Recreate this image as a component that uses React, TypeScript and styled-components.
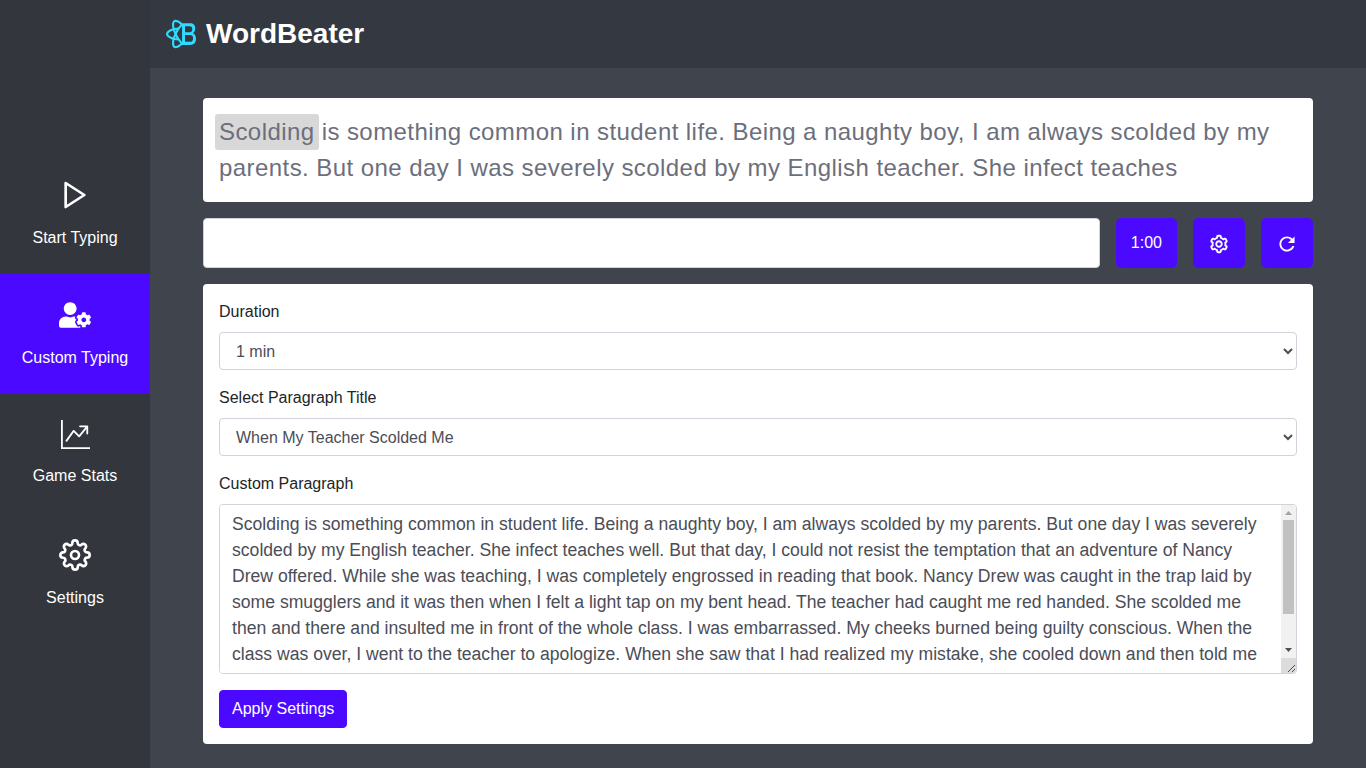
import React, { useLayoutEffect, useRef, useState } from "react";
import styled, { createGlobalStyle } from "styled-components";
import { SiReactbootstrap } from "react-icons/si";
import { FaUserCog } from "react-icons/fa";
import { FiPlay, FiSettings } from "react-icons/fi";
import { BsGraphUpArrow } from "react-icons/bs";
import { BiCog } from "react-icons/bi";
import { IoMdRefresh } from "react-icons/io";

const accent = "#4b0aff";

const GlobalStyle = createGlobalStyle`
  *, *::before, *::after { box-sizing: border-box; }
  body {
    margin: 0;
    background: #40444c;
    color: #212529;
    font-family: "Liberation Sans", Arial, sans-serif;
    font-size: 16px;
    line-height: 24px;
  }
  button, input, select, textarea { font: inherit; margin: 0; }
`;

const Shell = styled.div`
  display: grid;
  grid-template-columns: 150px minmax(0, 1fr);
  min-height: 100vh;
`;

const Sidebar = styled.nav`
  display: flex;
  flex-direction: column;
  justify-content: center;
  padding-top: 20px;
  background: #33363d;
`;

const NavItem = styled.a<{ $active?: boolean }>`
  display: flex;
  flex-direction: column;
  align-items: center;
  gap: 15px;
  min-height: 120px;
  padding: 25px 0 24px;
  color: #fff;
  text-decoration: none;
  background: ${(p) => (p.$active ? accent : "transparent")};
`;

const NavIcon = styled.span`
  display: flex;
  align-items: center;
  min-height: 30px;
`;

const Header = styled.header`
  display: flex;
  align-items: center;
  gap: 10px;
  height: 68px;
  padding: 0 16px;
  background: #343840;
`;

const Brand = styled.h1`
  margin: 0;
  color: #fff;
  font-size: 28px;
  line-height: 34px;
  font-weight: 700;
`;

const Content = styled.main`
  display: flex;
  flex-direction: column;
  gap: 16px;
  max-width: 1140px;
  margin: 0 auto;
  padding: 30px 15px 24px;
`;

const Card = styled.section`
  padding: 16px;
  border-radius: 4px;
  background: #fff;
`;

const Passage = styled.p`
  margin: 0;
  color: #6c6f7b;
  font-size: 24px;
  line-height: 36px;
  letter-spacing: 0.018em;
`;

const CurrentWord = styled.mark`
  display: inline-block;
  border-radius: 3px;
  color: inherit;
  background: #d8d8d8;
  box-shadow: -4px 0 #d8d8d8, 4px 0 #d8d8d8;
`;

const Controls = styled.div`
  display: flex;
  gap: 16px;
`;

const TypingInput = styled.input`
  flex: 1;
  min-width: 0;
  height: 50px;
  padding: 6px 12px;
  border: 1px solid #ced4da;
  border-radius: 4px;
  background: #fff;
`;

const Button = styled.button`
  padding: 6px 12px;
  border: 1px solid ${accent};
  border-radius: 4px;
  color: #fff;
  background: ${accent};
  cursor: pointer;
`;

const ControlButton = styled(Button)`
  height: 50px;
  padding: 0 14px;
  border-radius: 5px;

  svg { vertical-align: middle; }
`;

const Field = styled.div`
  display: flex;
  flex-direction: column;
  gap: 8px;
  margin-bottom: 16px;
`;

const Select = styled.select`
  height: 38px;
  padding: 6px 12px;
  border: 1px solid #ced4da;
  border-radius: 4px;
  color: #4b4d57;
  background: #fff;
`;

const TextAreaFrame = styled.div`
  position: relative;
  overflow: hidden;
  border: 1px solid #ced4da;
  border-radius: 4px;
`;

const TextArea = styled.textarea`
  display: block;
  width: 100%;
  height: 168px;
  padding: 6px 27px 6px 12px;
  border: 0;
  color: #4b4d57;
  background: #fff;
  font-size: 110%;
  line-height: 26px;
  resize: none;
  scrollbar-width: none;
`;

const ScrollBar = styled.div`
  position: absolute;
  top: 0;
  right: 0;
  bottom: 0;
  display: flex;
  flex-direction: column;
  width: 15px;
  background: #f1f1f1;

  svg { display: block; }
`;

const Track = styled.div`
  flex: 1;
  padding: 0 2px;
`;

const Thumb = styled.div`
  background: #c1c1c1;
`;

const paragraph =
  "Scolding is something common in student life. Being a naughty boy, I am always scolded by my parents. But one day I was severely scolded by my English teacher. She infect teaches well. But that day, I could not resist the temptation that an adventure of Nancy Drew offered. While she was teaching, I was completely engrossed in reading that book. Nancy Drew was caught in the trap laid by some smugglers and it was then when I felt a light tap on my bent head. The teacher had caught me red handed. She scolded me then and there and insulted me in front of the whole class. I was embarrassed. My cheeks burned being guilty conscious. When the class was over, I went to the teacher to apologize. When she saw that I had realized my mistake, she cooled down and then told me in a very kind manner how disheartening it was when she found any student not paying attention. I was genuinely sorry and promised to myself never to commit such a mistake again.";

const navItems = [
  { label: "Start Typing", icon: <FiPlay size={32} /> },
  { label: "Custom Typing", icon: <FaUserCog size={32} />, active: true },
  { label: "Game Stats", icon: <BsGraphUpArrow size={29} /> },
  { label: "Settings", icon: <FiSettings size={32} /> },
];

function ParagraphEditor({ id }: { id: string }) {
  const ref = useRef<HTMLTextAreaElement>(null);
  const [text, setText] = useState(paragraph);
  const [scroll, setScroll] = useState({ offset: 0, visible: 1 });

  const measure = () => {
    const el = ref.current;
    if (!el) return;
    setScroll({
      offset: el.scrollTop / el.scrollHeight,
      visible: el.clientHeight / el.scrollHeight,
    });
  };

  useLayoutEffect(measure, [text]);

  return (
    <TextAreaFrame>
      <TextArea
        id={id}
        ref={ref}
        value={text}
        onScroll={measure}
        onChange={(e) => setText(e.target.value)}
      />
      <ScrollBar aria-hidden="true">
        <svg width="15" height="15">
          <polygon points="4,10 11,10 7.5,6" fill="#a3a3a3" />
        </svg>
        <Track>
          <Thumb
            style={{
              height: `${Math.round(scroll.visible * 123)}px`,
              marginTop: `${Math.round(scroll.offset * 123)}px`,
            }}
          />
        </Track>
        <svg width="15" height="15">
          <polygon points="4,5 11,5 7.5,9" fill="#505050" />
        </svg>
        <svg width="15" height="15">
          <rect width="15" height="15" fill="#dcdcdc" />
          <path d="M7 14L14 7M11 14L14 11" stroke="#505050" fill="none" />
        </svg>
      </ScrollBar>
    </TextAreaFrame>
  );
}

export default function App() {
  const [typed, setTyped] = useState("");

  return (
    <>
      <GlobalStyle />
      <Shell>
        <Sidebar aria-label="Main">
          {navItems.map((item) => (
            <NavItem
              key={item.label}
              href="#"
              $active={item.active}
              aria-current={item.active ? "page" : undefined}
            >
              <NavIcon>{item.icon}</NavIcon>
              <span>{item.label}</span>
            </NavItem>
          ))}
        </Sidebar>
        <div>
          <Header>
            <SiReactbootstrap size={30} color="#2fdcff" />
            <Brand>WordBeater</Brand>
          </Header>
          <Content>
            <Card>
              <Passage>
                <CurrentWord>Scolding</CurrentWord> is something common in student life. Being a
                naughty boy, I am always scolded by my parents. But one day I was severely scolded
                by my English teacher. She infect teaches
              </Passage>
            </Card>
            <Controls>
              <TypingInput
                aria-label="Type the paragraph"
                value={typed}
                onChange={(e) => setTyped(e.target.value)}
              />
              <ControlButton type="button">1:00</ControlButton>
              <ControlButton type="button" aria-label="Settings">
                <BiCog size={22} />
              </ControlButton>
              <ControlButton type="button" aria-label="Restart">
                <IoMdRefresh size={22} />
              </ControlButton>
            </Controls>
            <Card as="form" onSubmit={(e: React.FormEvent) => e.preventDefault()}>
              <Field>
                <label htmlFor="duration">Duration</label>
                <Select id="duration">
                  <option>1 min</option>
                  <option>2 min</option>
                  <option>5 min</option>
                </Select>
              </Field>
              <Field>
                <label htmlFor="title">Select Paragraph Title</label>
                <Select id="title">
                  <option>When My Teacher Scolded Me</option>
                </Select>
              </Field>
              <Field>
                <label htmlFor="paragraph">Custom Paragraph</label>
                <ParagraphEditor id="paragraph" />
              </Field>
              <Button type="submit">Apply Settings</Button>
            </Card>
          </Content>
        </div>
      </Shell>
    </>
  );
}
